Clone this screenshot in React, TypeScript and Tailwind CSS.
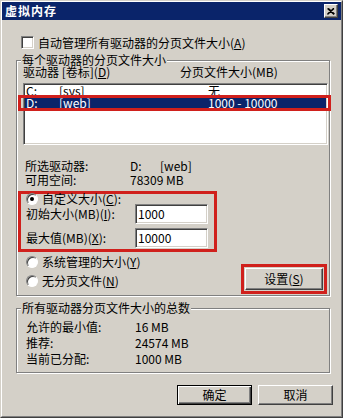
import React from "react";

const raised =
  "border border-white border-r-[#404040] border-b-[#404040] shadow-[inset_-1px_-1px_0_#808080] bg-[#d4d0c8]";
const sunken =
  "border border-[#808080] border-r-white border-b-white shadow-[inset_1px_1px_0_#404040,inset_-1px_-1px_0_#d4d0c8]";
const group =
  "border border-[#808080] shadow-[1px_1px_0_#fff,inset_1px_1px_0_#fff] min-w-0";
const annotate = "border-[3px] border-[#d0201c]";

function Radio({ checked = false }: { checked?: boolean }) {
  return (
    <span className="flex h-[12px] w-[12px] shrink-0 items-center justify-center rounded-full border border-[#808080] border-b-white border-r-white bg-white shadow-[inset_1px_1px_0_#404040]">
      {checked && <span className="h-[4px] w-[4px] rounded-full bg-black" />}
    </span>
  );
}

function Key({ k }: { k: string }) {
  return (
    <>
      (<span className="underline underline-offset-1">{k}</span>)
    </>
  );
}

function Field({ value }: { value: string }) {
  return (
    <div className={`flex h-[20px] w-[73px] items-center bg-white pl-[2px] ${sunken}`}>
      {value}
    </div>
  );
}

export default function App() {
  return (
    <div className="h-[418px] w-[343px] border border-[#d4d0c8] border-b-[#404040] border-r-[#404040] bg-[#d4d0c8] font-['Noto_Sans_CJK_SC','Noto_Sans_CJK_JP',sans-serif] text-[12px] leading-[12px] text-black">
      <div className="flex h-full flex-col border border-white border-b-[#808080] border-r-[#808080]">
        {/* title bar */}
        <div className="flex h-[18px] shrink-0 items-center justify-between bg-[#0a246a] pl-[3px] pr-[3px]">
          <span className="font-bold tracking-[1px] text-white">虚拟内存</span>
          <span className={`flex h-[14px] w-[14px] items-center justify-center ${raised}`}>
            <svg width="8" height="7" viewBox="0 0 8 7">
              <path d="M0.5 0.5 L7 6.5 M1.5 0.5 L7.5 6 M7 0.5 L0.5 6.5 M6.5 0.5 L0.5 6" stroke="#000" strokeWidth="1.1" fill="none" />
            </svg>
          </span>
        </div>

        <div className="flex flex-col pl-[14px] pr-[11px]">
          {/* auto manage */}
          <div className="ml-[5px] mt-[16px] flex h-[13px] items-center gap-[4px]">
            <span className={`h-[13px] w-[13px] bg-white ${sunken}`} />
            <span>
              自动管理所有驱动器的分页文件大小<Key k="A" />
            </span>
          </div>

          {/* per-drive */}
          <fieldset className={`mt-[5px] pb-[1px] ${group}`}>
            <legend className="ml-[4px] bg-[#d4d0c8] px-[1px] leading-[12px]">每个驱动器的分页文件大小</legend>
            <div className="flex h-[12px] items-center pl-[6px]">
              <span className="w-[157px]">
                驱动器 [卷标]<Key k="D" />
              </span>
              <span>分页文件大小(MB)</span>
            </div>
            <div className={`ml-[6px] mt-[5px] h-[62px] w-[305px] bg-white p-[1px] ${sunken}`}>
              <div className="flex h-[12px] items-center pl-[1px]">
                <span className="w-[33px]">C:</span>
                <span className="w-[149px]">[sys]</span>
                <span>无</span>
              </div>
              <div className="relative flex h-[12px] items-center bg-[#0a246a] pl-[1px] text-white">
                <span className="w-[33px]">D:</span>
                <span className="w-[149px]">[web]</span>
                <span>1000 - 10000</span>
                <span className={`absolute -bottom-[2px] -left-[7px] -right-[5px] -top-[2px] ${annotate}`} />
              </div>
            </div>

            <div className="mt-[14px] flex flex-col pl-[8px] leading-[14px]">
              <div className="flex">
                <span className="w-[105px]">所选驱动器:</span>
                <span className="w-[30px]">D:</span>
                <span>[web]</span>
              </div>
              <div className="flex">
                <span className="w-[105px]">可用空间:</span>
                <span>78309 MB</span>
              </div>
            </div>

            {/* custom size */}
            <div className={`ml-[1px] mt-[4px] w-[199px] pb-[1px] ${annotate}`}>
              <div className="ml-[5px] flex h-[10px] items-center gap-[4px]">
                <Radio checked />
                <span>
                  自定义大小<Key k="C" />:
                </span>
              </div>
              <div className="ml-[5px] flex h-[20px] items-center">
                <span className="w-[109px]">
                  初始大小(MB)<Key k="I" />:
                </span>
                <Field value="1000" />
              </div>
              <div className="ml-[5px] mt-[4px] flex h-[20px] items-center">
                <span className="w-[109px]">
                  最大值(MB)<Key k="X" />:
                </span>
                <Field value="10000" />
              </div>
            </div>

            <div className="flex items-start justify-between pr-[2px]">
              <div className="flex flex-col pl-[9px]">
                <div className="flex h-[19px] items-center gap-[4px]">
                  <Radio />
                  <span>
                    系统管理的大小<Key k="Y" />
                  </span>
                </div>
                <div className="flex h-[19px] items-center gap-[4px]">
                  <Radio />
                  <span>
                    无分页文件<Key k="N" />
                  </span>
                </div>
              </div>
              <div className={`mt-[12px] p-[1px] ${annotate}`}>
                <button className={`flex h-[22px] w-[78px] items-center justify-center ${raised}`}>
                  <span>
                    设置<Key k="S" />
                  </span>
                </button>
              </div>
            </div>
          </fieldset>

          {/* totals */}
          <fieldset className={`mt-[6px] pb-[5px] ${group}`}>
            <legend className="ml-[4px] bg-[#d4d0c8] px-[1px] leading-[12px]">所有驱动器分页文件大小的总数</legend>
            <div className="mt-[5px] flex flex-col pl-[9px] leading-[16px]">
              <div className="flex">
                <span className="w-[109px]">允许的最小值:</span>
                <span>16 MB</span>
              </div>
              <div className="flex">
                <span className="w-[109px]">推荐:</span>
                <span>24574 MB</span>
              </div>
              <div className="flex">
                <span className="w-[109px]">当前已分配:</span>
                <span>1000 MB</span>
              </div>
            </div>
          </fieldset>

          {/* dialog buttons */}
          <div className="-mr-[3px] mt-[12px] flex justify-end gap-[6px]">
            <button className="flex h-[20px] w-[75px] items-center justify-center border border-black bg-[#d4d0c8] shadow-[inset_1px_1px_0_#fff,inset_-1px_-1px_0_#404040,inset_-2px_-2px_0_#808080]">
              确定
            </button>
            <button className={`flex h-[20px] w-[75px] items-center justify-center ${raised}`}>取消</button>
          </div>
        </div>
      </div>
    </div>
  );
}
